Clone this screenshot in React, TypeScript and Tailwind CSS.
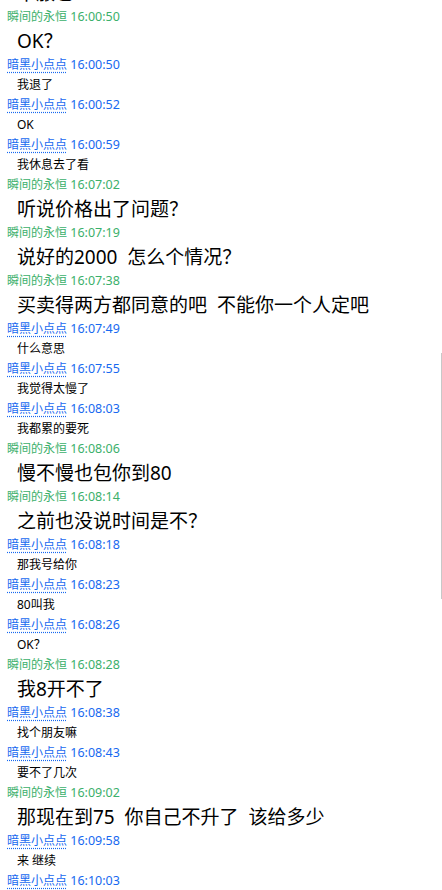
import React from 'react';

type Msg = {
  who: 'g' | 'b';
  time: string;
  text: string;
};

const NAMES = {
  g: '瞬间的永恒',
  b: '暗黑小点点',
};

const messages: Msg[] = [
  { who: 'g', time: '16:00:50', text: 'OK？' },
  { who: 'b', time: '16:00:50', text: '我退了' },
  { who: 'b', time: '16:00:52', text: 'OK' },
  { who: 'b', time: '16:00:59', text: '我休息去了看' },
  { who: 'g', time: '16:07:02', text: '听说价格出了问题？' },
  { who: 'g', time: '16:07:19', text: '说好的2000  怎么个情况？' },
  { who: 'g', time: '16:07:38', text: '买卖得两方都同意的吧  不能你一个人定吧' },
  { who: 'b', time: '16:07:49', text: '什么意思' },
  { who: 'b', time: '16:07:55', text: '我觉得太慢了' },
  { who: 'b', time: '16:08:03', text: '我都累的要死' },
  { who: 'g', time: '16:08:06', text: '慢不慢也包你到80' },
  { who: 'g', time: '16:08:14', text: '之前也没说时间是不？' },
  { who: 'b', time: '16:08:18', text: '那我号给你' },
  { who: 'b', time: '16:08:23', text: '80叫我' },
  { who: 'b', time: '16:08:26', text: 'OK？' },
  { who: 'g', time: '16:08:28', text: '我8开不了' },
  { who: 'b', time: '16:08:38', text: '找个朋友嘛' },
  { who: 'b', time: '16:08:43', text: '要不了几次' },
  { who: 'g', time: '16:09:02', text: '那现在到75  你自己不升了  该给多少' },
  { who: 'b', time: '16:09:58', text: '来 继续' },
  { who: 'b', time: '16:10:03', text: '' },
];

const Header: React.FC<{ who: 'g' | 'b'; time: string }> = ({ who, time }) => (
  <div
    className={`h-5 pl-[7px] text-[12px] leading-5 whitespace-pre ${
      who === 'g' ? 'text-[#3bb06b]' : 'text-[#1769f0]'
    }`}
  >
    <span
      className={
        who === 'b' ? 'underline decoration-dotted decoration-[#1769f0] underline-offset-[3px]' : ''
      }
    >
      {NAMES[who]}
    </span>
    <span className="text-[12.5px]"> {time}</span>
  </div>
);

export default function App() {
  return (
    <div
      className="relative h-[890px] w-[442px] overflow-hidden bg-white text-black"
      style={{ fontFamily: '"Noto Sans", "Noto Sans CJK SC", sans-serif' }}
    >
      <div className="-mt-[21px] flex flex-col">
        {/* partly scrolled-off message */}
        <div className="h-7 pl-[17px] text-[19px] leading-7">不服它</div>

        {messages.map((m, i) => (
          <div key={i}>
            <Header who={m.who} time={m.time} />
            {m.text &&
              (m.who === 'g' ? (
                <div className="h-7 pl-[17px] text-[19px] leading-7 whitespace-pre">{m.text}</div>
              ) : (
                <div className="h-5 pl-[17px] text-[12px] leading-5 whitespace-pre">{m.text}</div>
              ))}
          </div>
        ))}
      </div>

      {/* scrollbar thumb edge */}
      <div className="absolute right-0 top-[353px] h-[246px] w-px bg-[#c8c8c8]" />
    </div>
  );
}
